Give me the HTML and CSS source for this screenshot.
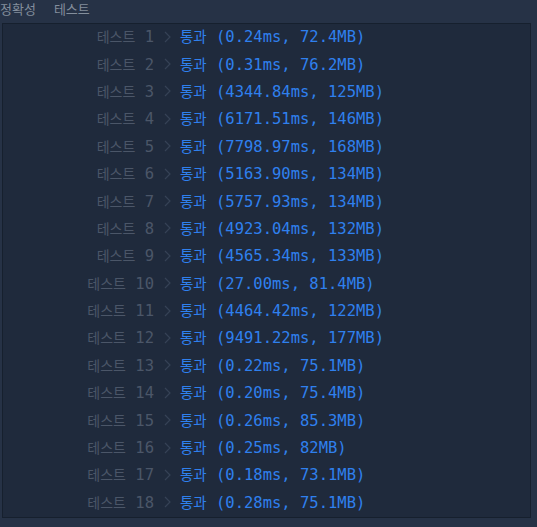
FILE: index.html
```html
<!DOCTYPE html>
<html lang="ko">
  <head>
    <meta charset="UTF-8" />
    <title>채점 결과</title>
    <link rel="stylesheet" href="styles.css">
  </head>
  <body>
    <div class="tabs">
      <span class="tab">정확성</span>
      <span class="tab">테스트</span>
    </div>

    <div class="console">
      <table class="results" id="results"></table>
    </div>

    <script>
      const results = [
        ["0.24ms", "72.4MB"],
        ["0.31ms", "76.2MB"],
        ["4344.84ms", "125MB"],
        ["6171.51ms", "146MB"],
        ["7798.97ms", "168MB"],
        ["5163.90ms", "134MB"],
        ["5757.93ms", "134MB"],
        ["4923.04ms", "132MB"],
        ["4565.34ms", "133MB"],
        ["27.00ms", "81.4MB"],
        ["4464.42ms", "122MB"],
        ["9491.22ms", "177MB"],
        ["0.22ms", "75.1MB"],
        ["0.20ms", "75.4MB"],
        ["0.26ms", "85.3MB"],
        ["0.25ms", "82MB"],
        ["0.18ms", "73.1MB"],
        ["0.28ms", "75.1MB"],
      ];

      const chevron =
        '<svg width="7" height="12" viewBox="0 0 7 12"><polyline points="1,1 6,6 1,11" fill="none" stroke="#364256" stroke-width="1.2"/></svg>';

      const table = document.getElementById("results");
      results.forEach(([time, mem], i) => {
        const row = document.createElement("tr");
        row.innerHTML =
          '<td class="label"><span class="ko">테스트</span> ' + (i + 1) + "</td>" +
          '<td class="arrow">' + chevron + "</td>" +
          '<td class="result"><span class="ko">통과</span> (' + time + ", " + mem + ")</td>";
        table.appendChild(row);
      });
    </script>
  </body>
</html>
```

FILE: styles.css
```css
body {
  margin: 0;
  background: #263246;
  font-family: "DejaVu Sans Mono", "Noto Sans CJK KR", monospace;
  width: 537px;
  height: 527px;
  overflow: hidden;
}

.tabs {
  display: flex;
  gap: 18px;
  height: 22px;
  padding-top: 1px;
}

.tab {
  font-family: "Noto Sans CJK KR", "Noto Sans", sans-serif;
  font-size: 13px;
  line-height: 15px;
  color: #838e9c;
}

.console {
  margin-left: 2px;
  width: 527px;
  height: 493px;
  background: #1f2a3c;
  border: 1px solid #16202e;
}

.results {
  border-collapse: collapse;
  font-size: 15.5px;
  line-height: 20px;
}

.results td {
  height: 25.4px;
  padding: 0 0 2px;
  white-space: nowrap;
}

.ko {
  font-family: "Noto Sans CJK KR", sans-serif;
  font-size: 14px;
}

.label {
  width: 151px;
  text-align: right;
  color: #4b5668;
}

.arrow {
  width: 26px;
  text-align: center;
}

.arrow svg {
  display: block;
  margin: 0 auto;
}

.result {
  color: #2f80ee;
}

.result .ko {
  font-size: 14.5px;
}
```
